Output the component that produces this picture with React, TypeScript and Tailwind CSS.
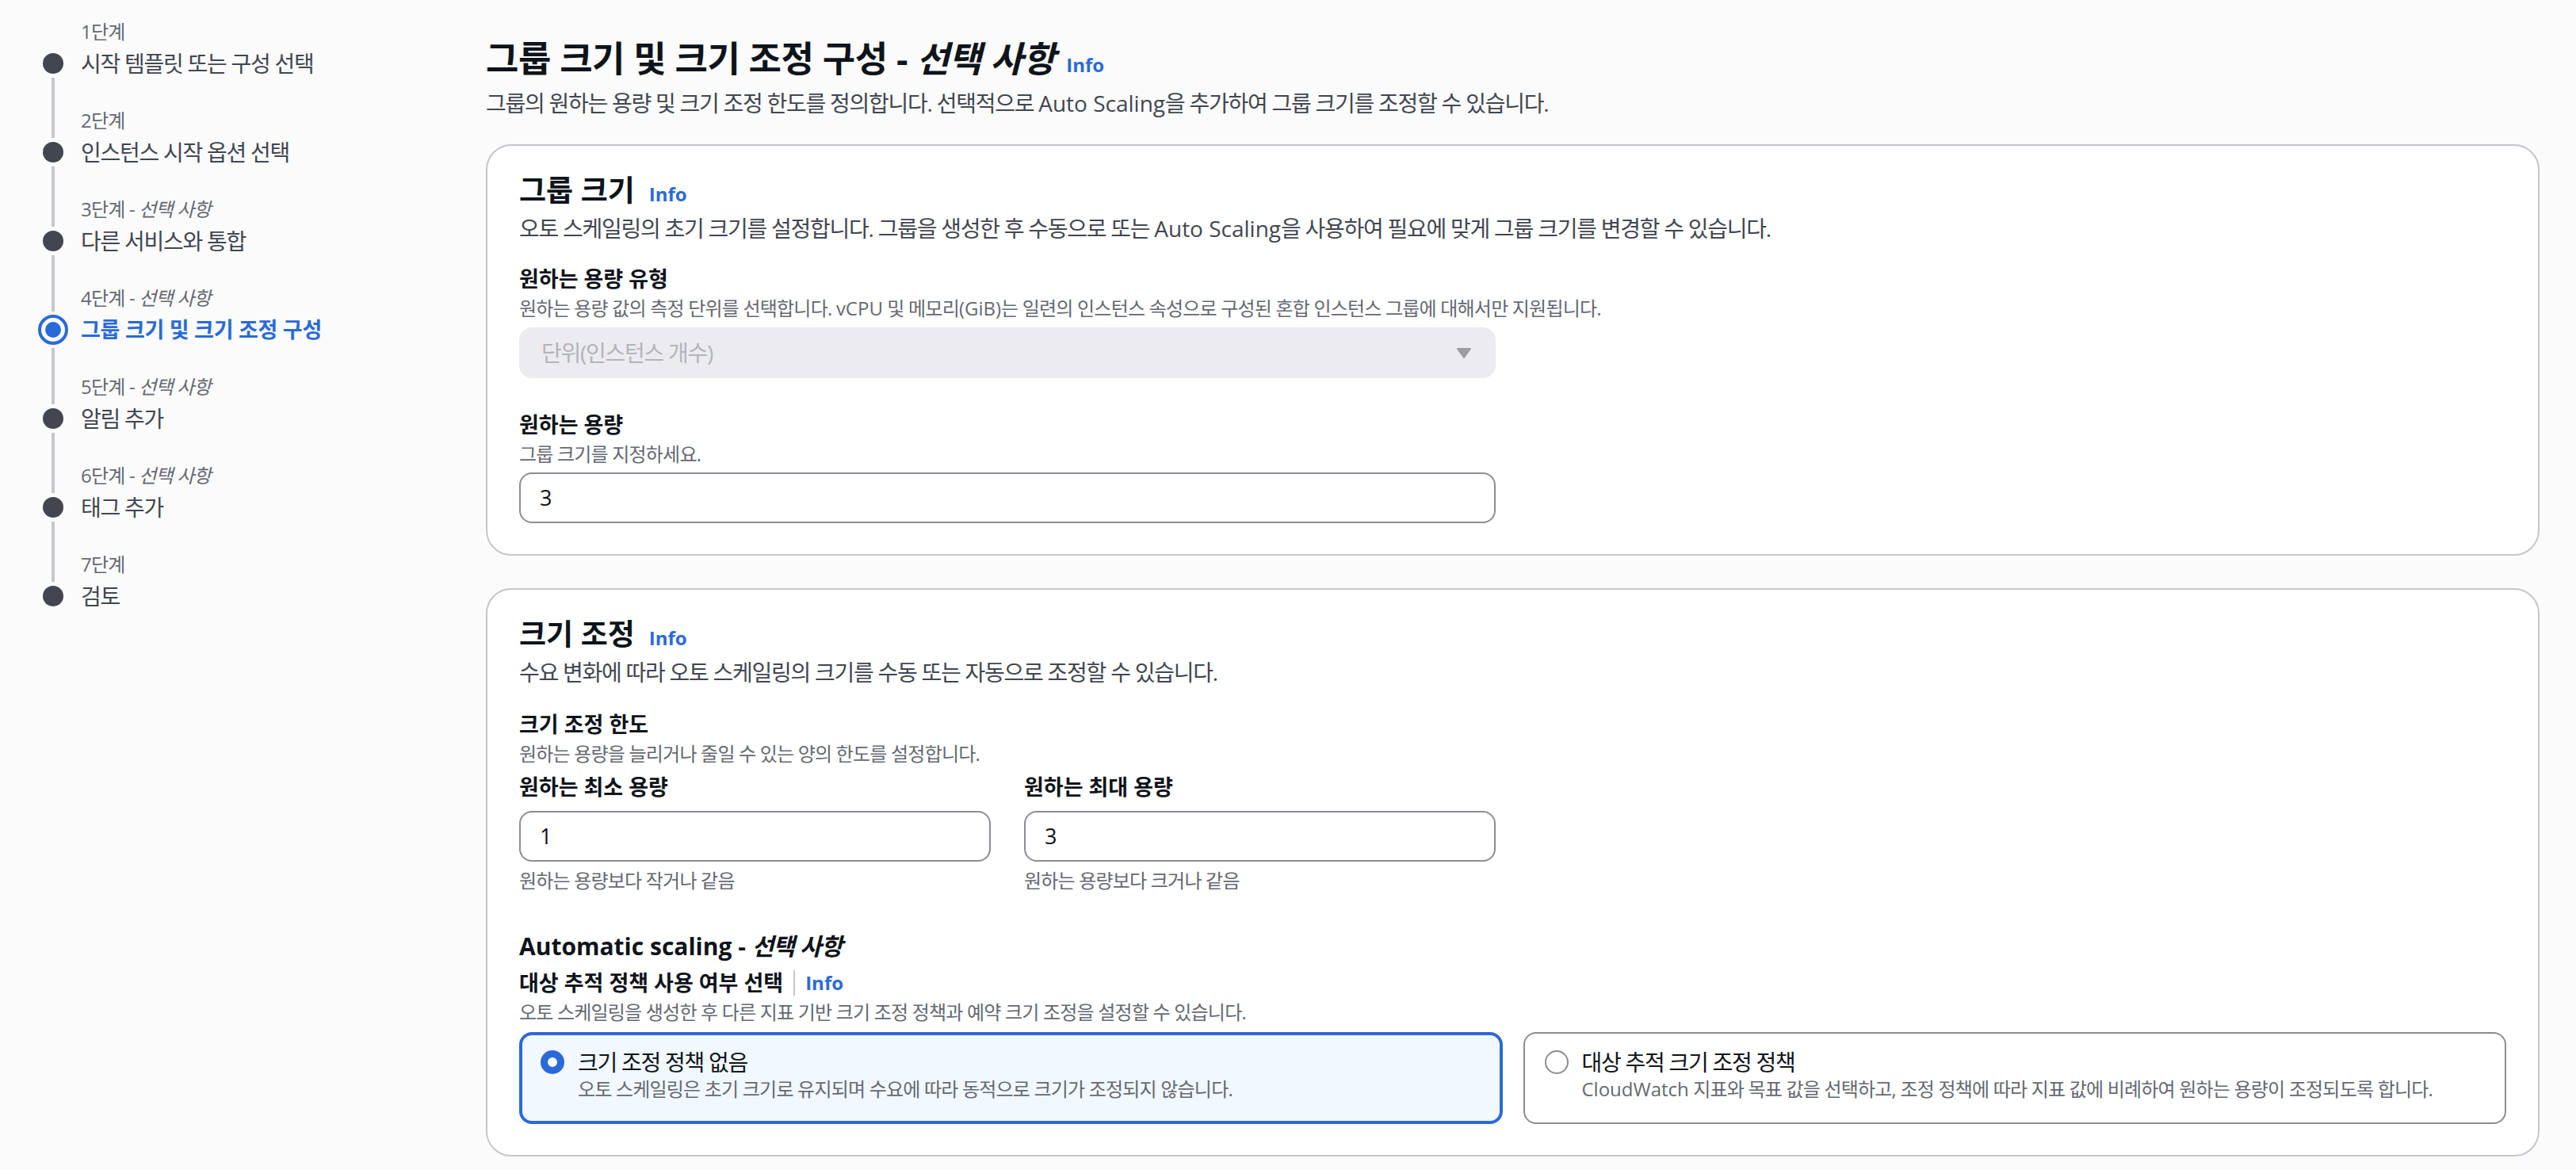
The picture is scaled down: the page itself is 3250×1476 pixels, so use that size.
import React from 'react';

const FONT = "font-['Open_Sans','Noto_Sans_CJK_KR',sans-serif]";

type Step = { label: string; optional?: boolean; title: string; active?: boolean };

const STEPS: Step[] = [
  { label: '1단계', title: '시작 템플릿 또는 구성 선택' },
  { label: '2단계', title: '인스턴스 시작 옵션 선택' },
  { label: '3단계', optional: true, title: '다른 서비스와 통합' },
  { label: '4단계', optional: true, title: '그룹 크기 및 크기 조정 구성', active: true },
  { label: '5단계', optional: true, title: '알림 추가' },
  { label: '6단계', optional: true, title: '태그 추가' },
  { label: '7단계', title: '검토' },
];

function Info() {
  return (
    <span className="text-[24px] leading-none font-bold tracking-normal text-[#2a6ad8]">Info</span>
  );
}

function Sidebar() {
  return (
    <nav className="w-[613px] shrink-0">
      {STEPS.map((s, i) => {
        const first = i === 0;
        const last = i === STEPS.length - 1;
        return (
          <div key={s.label} className="flex h-[112px]">
            <div className="w-[102px] shrink-0 pl-[54px]">
              <div className="w-[26px] h-full flex flex-col items-center">
                {s.active ? (
                  <>
                    <div className={`h-[57px] w-[4px] shrink-0 ${first ? '' : 'bg-[#c6c6cd]'}`} />
                    <div className="mt-[4px] w-[38px] h-[38px] shrink-0 rounded-full border-[4px] border-[#2a6ad8] bg-white flex items-center justify-center">
                      <div className="w-[20px] h-[20px] rounded-full bg-[#2a6ad8]" />
                    </div>
                    <div className={`mt-[4px] flex-1 w-[4px] ${last ? '' : 'bg-[#c6c6cd]'}`} />
                  </>
                ) : (
                  <>
                    <div className={`h-[62px] w-[4px] shrink-0 ${first ? '' : 'bg-[#c6c6cd]'}`} />
                    <div className="mt-[5px] w-[26px] h-[26px] shrink-0 rounded-full bg-[#424650]" />
                    <div className={`mt-[5px] flex-1 w-[4px] ${last ? '' : 'bg-[#c6c6cd]'}`} />
                  </>
                )}
              </div>
            </div>
            <div className="pt-[24px] whitespace-nowrap">
              <div className="text-[24px] leading-[32px] text-[#656871]">
                {s.label}
                {s.optional && (
                  <>
                    {' - '}
                    <i>선택 사항</i>
                  </>
                )}
              </div>
              <div
                className={`mt-[4px] leading-[40px] ${
                  s.active
                    ? 'text-[27px] font-bold tracking-[-0.01em] text-[#2a6ad8]'
                    : 'text-[28px] tracking-[-0.045em] text-[#424650]'
                }`}
              >
                {s.title}
              </div>
            </div>
          </div>
        );
      })}
    </nav>
  );
}

function ContainerHeader({ title, desc }: { title: string; desc: React.ReactNode }) {
  return (
    <>
      <div className="flex items-baseline gap-[18px]">
        <h2 className="text-[37px] leading-[48px] font-bold tracking-normal text-[#0f141a]">{title}</h2>
        <Info />
      </div>
      <p className="mt-[6px] text-[28px] leading-[36px] tracking-[-0.045em] text-[#424650]">{desc}</p>
    </>
  );
}

function Label({ children, className = '' }: { children: React.ReactNode; className?: string }) {
  return (
    <div className={`text-[27px] leading-[36px] font-bold tracking-normal text-[#0f141a] ${className}`}>
      {children}
    </div>
  );
}

function Hint({ children, className = '' }: { children: React.ReactNode; className?: string }) {
  return <div className={`text-[24px] leading-[32px] text-[#656871] ${className}`}>{children}</div>;
}

function TextInput({ value, className = '' }: { value: string; className?: string }) {
  return (
    <div
      className={`h-[64px] rounded-[16px] border-2 border-[#8c8c94] bg-white flex items-center pl-[24px] text-[27px] text-[#0f141a] ${className}`}
    >
      {value}
    </div>
  );
}

function Tile({ selected, title, desc }: { selected?: boolean; title: string; desc: React.ReactNode }) {
  return (
    <div
      className={
        selected
          ? 'rounded-[16px] border-[4px] border-[#2a6ad8] bg-[#f1f8ff] pt-[16px] pb-[24px] pl-[23px] pr-[24px]'
          : 'rounded-[16px] border-2 border-[#8c8c94] bg-white pt-[18px] pb-[26px] pl-[25px] pr-[26px]'
      }
    >
      <div className="flex items-center gap-[17px]">
        {selected ? (
          <div className="w-[30px] h-[30px] shrink-0 rounded-full border-[9px] border-[#2a6ad8] bg-white" />
        ) : (
          <div className="w-[30px] h-[30px] shrink-0 rounded-full border-2 border-[#8c8c94] bg-white" />
        )}
        <div className="text-[28px] leading-[36px] tracking-[-0.045em] text-[#0f141a]">{title}</div>
      </div>
      <div className="pl-[47px] text-[24px] leading-[32px] text-[#656871]">{desc}</div>
    </div>
  );
}

export default function App() {
  return (
    <div className={`min-h-screen flex bg-[#fbfbfb] tracking-[-0.05em] ${FONT}`}>
      <Sidebar />
      <main className="flex-1 min-w-0 pt-[46px] pr-[46px] pb-[40px]">
        <div className="flex items-baseline gap-[14px]">
          <h1 className="text-[45px] leading-[56px] font-bold tracking-[-0.01em] text-[#0f141a]">
            그룹 크기 및 크기 조정 구성 - <i>선택 사항</i>
          </h1>
          <Info />
        </div>
        <p className="mt-[10px] text-[28px] leading-[36px] tracking-[-0.045em] text-[#424650]">
          그룹의 원하는 용량 및 크기 조정 한도를 정의합니다. 선택적으로{' '}
          <span className="tracking-normal">Auto Scaling</span>을 추가하여 그룹 크기를 조정할 수 있습니다.
        </p>

        {/* 그룹 크기 */}
        <section className="mt-[34px] rounded-[32px] border-2 border-[#c6c6cd] bg-white px-[40px] pt-[32px] pb-[39px]">
          <ContainerHeader
            title="그룹 크기"
            desc={
              <>
                오토 스케일링의 초기 크기를 설정합니다. 그룹을 생성한 후 수동으로 또는{' '}
                <span className="tracking-normal">Auto Scaling</span>을 사용하여 필요에 맞게 그룹 크기를 변경할 수
                있습니다.
              </>
            }
          />
          <Label className="mt-[28px]">원하는 용량 유형</Label>
          <Hint className="mt-[3px]">
            원하는 용량 값의 측정 단위를 선택합니다. <span className="tracking-normal">vCPU</span> 및 메모리
            <span className="tracking-normal">(GiB)</span>는 일련의 인스턴스 속성으로 구성된 혼합 인스턴스 그룹에
            대해서만 지원됩니다.
          </Hint>
          <div className="mt-[8px] w-[1232px] h-[64px] rounded-[16px] bg-[#ebebf0] border-2 border-[#ebebf0] flex items-center justify-between pl-[26px] pr-[22px] text-[28px] tracking-[-0.045em] text-[#b4b4bb]">
            <span>단위(인스턴스 개수)</span>
            <svg width="32" height="32" viewBox="0 0 16 16" aria-hidden="true">
              <path d="M4 5.5h8L8 11z" fill="#9c9ca5" stroke="#9c9ca5" strokeWidth="1" strokeLinejoin="round" />
            </svg>
          </div>
          <Label className="mt-[41px]">원하는 용량</Label>
          <Hint className="mt-[3px]">그룹 크기를 지정하세요.</Hint>
          <TextInput value="3" className="mt-[7px] w-[1232px]" />
        </section>

        {/* 크기 조정 */}
        <section className="mt-[41px] rounded-[32px] border-2 border-[#c6c6cd] bg-white px-[40px] pt-[32px] pb-[39px]">
          <ContainerHeader
            title="크기 조정"
            desc="수요 변화에 따라 오토 스케일링의 크기를 수동 또는 자동으로 조정할 수 있습니다."
          />
          <Label className="mt-[30px]">크기 조정 한도</Label>
          <Hint className="mt-[3px]">원하는 용량을 늘리거나 줄일 수 있는 양의 한도를 설정합니다.</Hint>
          <div className="mt-[8px] w-[1232px] grid grid-cols-2 gap-x-[42px]">
            <div>
              <Label>원하는 최소 용량</Label>
              <TextInput value="1" className="mt-[12px]" />
              <Hint className="mt-[8px]">원하는 용량보다 작거나 같음</Hint>
            </div>
            <div>
              <Label>원하는 최대 용량</Label>
              <TextInput value="3" className="mt-[12px]" />
              <Hint className="mt-[8px]">원하는 용량보다 크거나 같음</Hint>
            </div>
          </div>

          <h3 className="mt-[47px] text-[30px] leading-[40px] font-bold tracking-normal text-[#0f141a]">
            Automatic scaling - <i className="tracking-[-0.03em]">선택 사항</i>
          </h3>
          <div className="mt-[8px] flex items-center">
            <Label>대상 추적 정책 사용 여부 선택</Label>
            <div className="mx-[13px] w-[2px] h-[32px] bg-[#c6c6cd]" />
            <Info />
          </div>
          <Hint className="mt-[3px]">
            오토 스케일링을 생성한 후 다른 지표 기반 크기 조정 정책과 예약 크기 조정을 설정할 수 있습니다.
          </Hint>
          <div className="mt-[9px] grid grid-cols-2 gap-[26px]">
            <Tile
              selected
              title="크기 조정 정책 없음"
              desc="오토 스케일링은 초기 크기로 유지되며 수요에 따라 동적으로 크기가 조정되지 않습니다."
            />
            <Tile
              title="대상 추적 크기 조정 정책"
              desc={
                <>
                  <span className="tracking-normal">CloudWatch</span> 지표와 목표 값을 선택하고, 조정 정책에 따라
                  지표 값에 비례하여 원하는 용량이 조정되도록 합니다.
                </>
              }
            />
          </div>
        </section>
      </main>
    </div>
  );
}
